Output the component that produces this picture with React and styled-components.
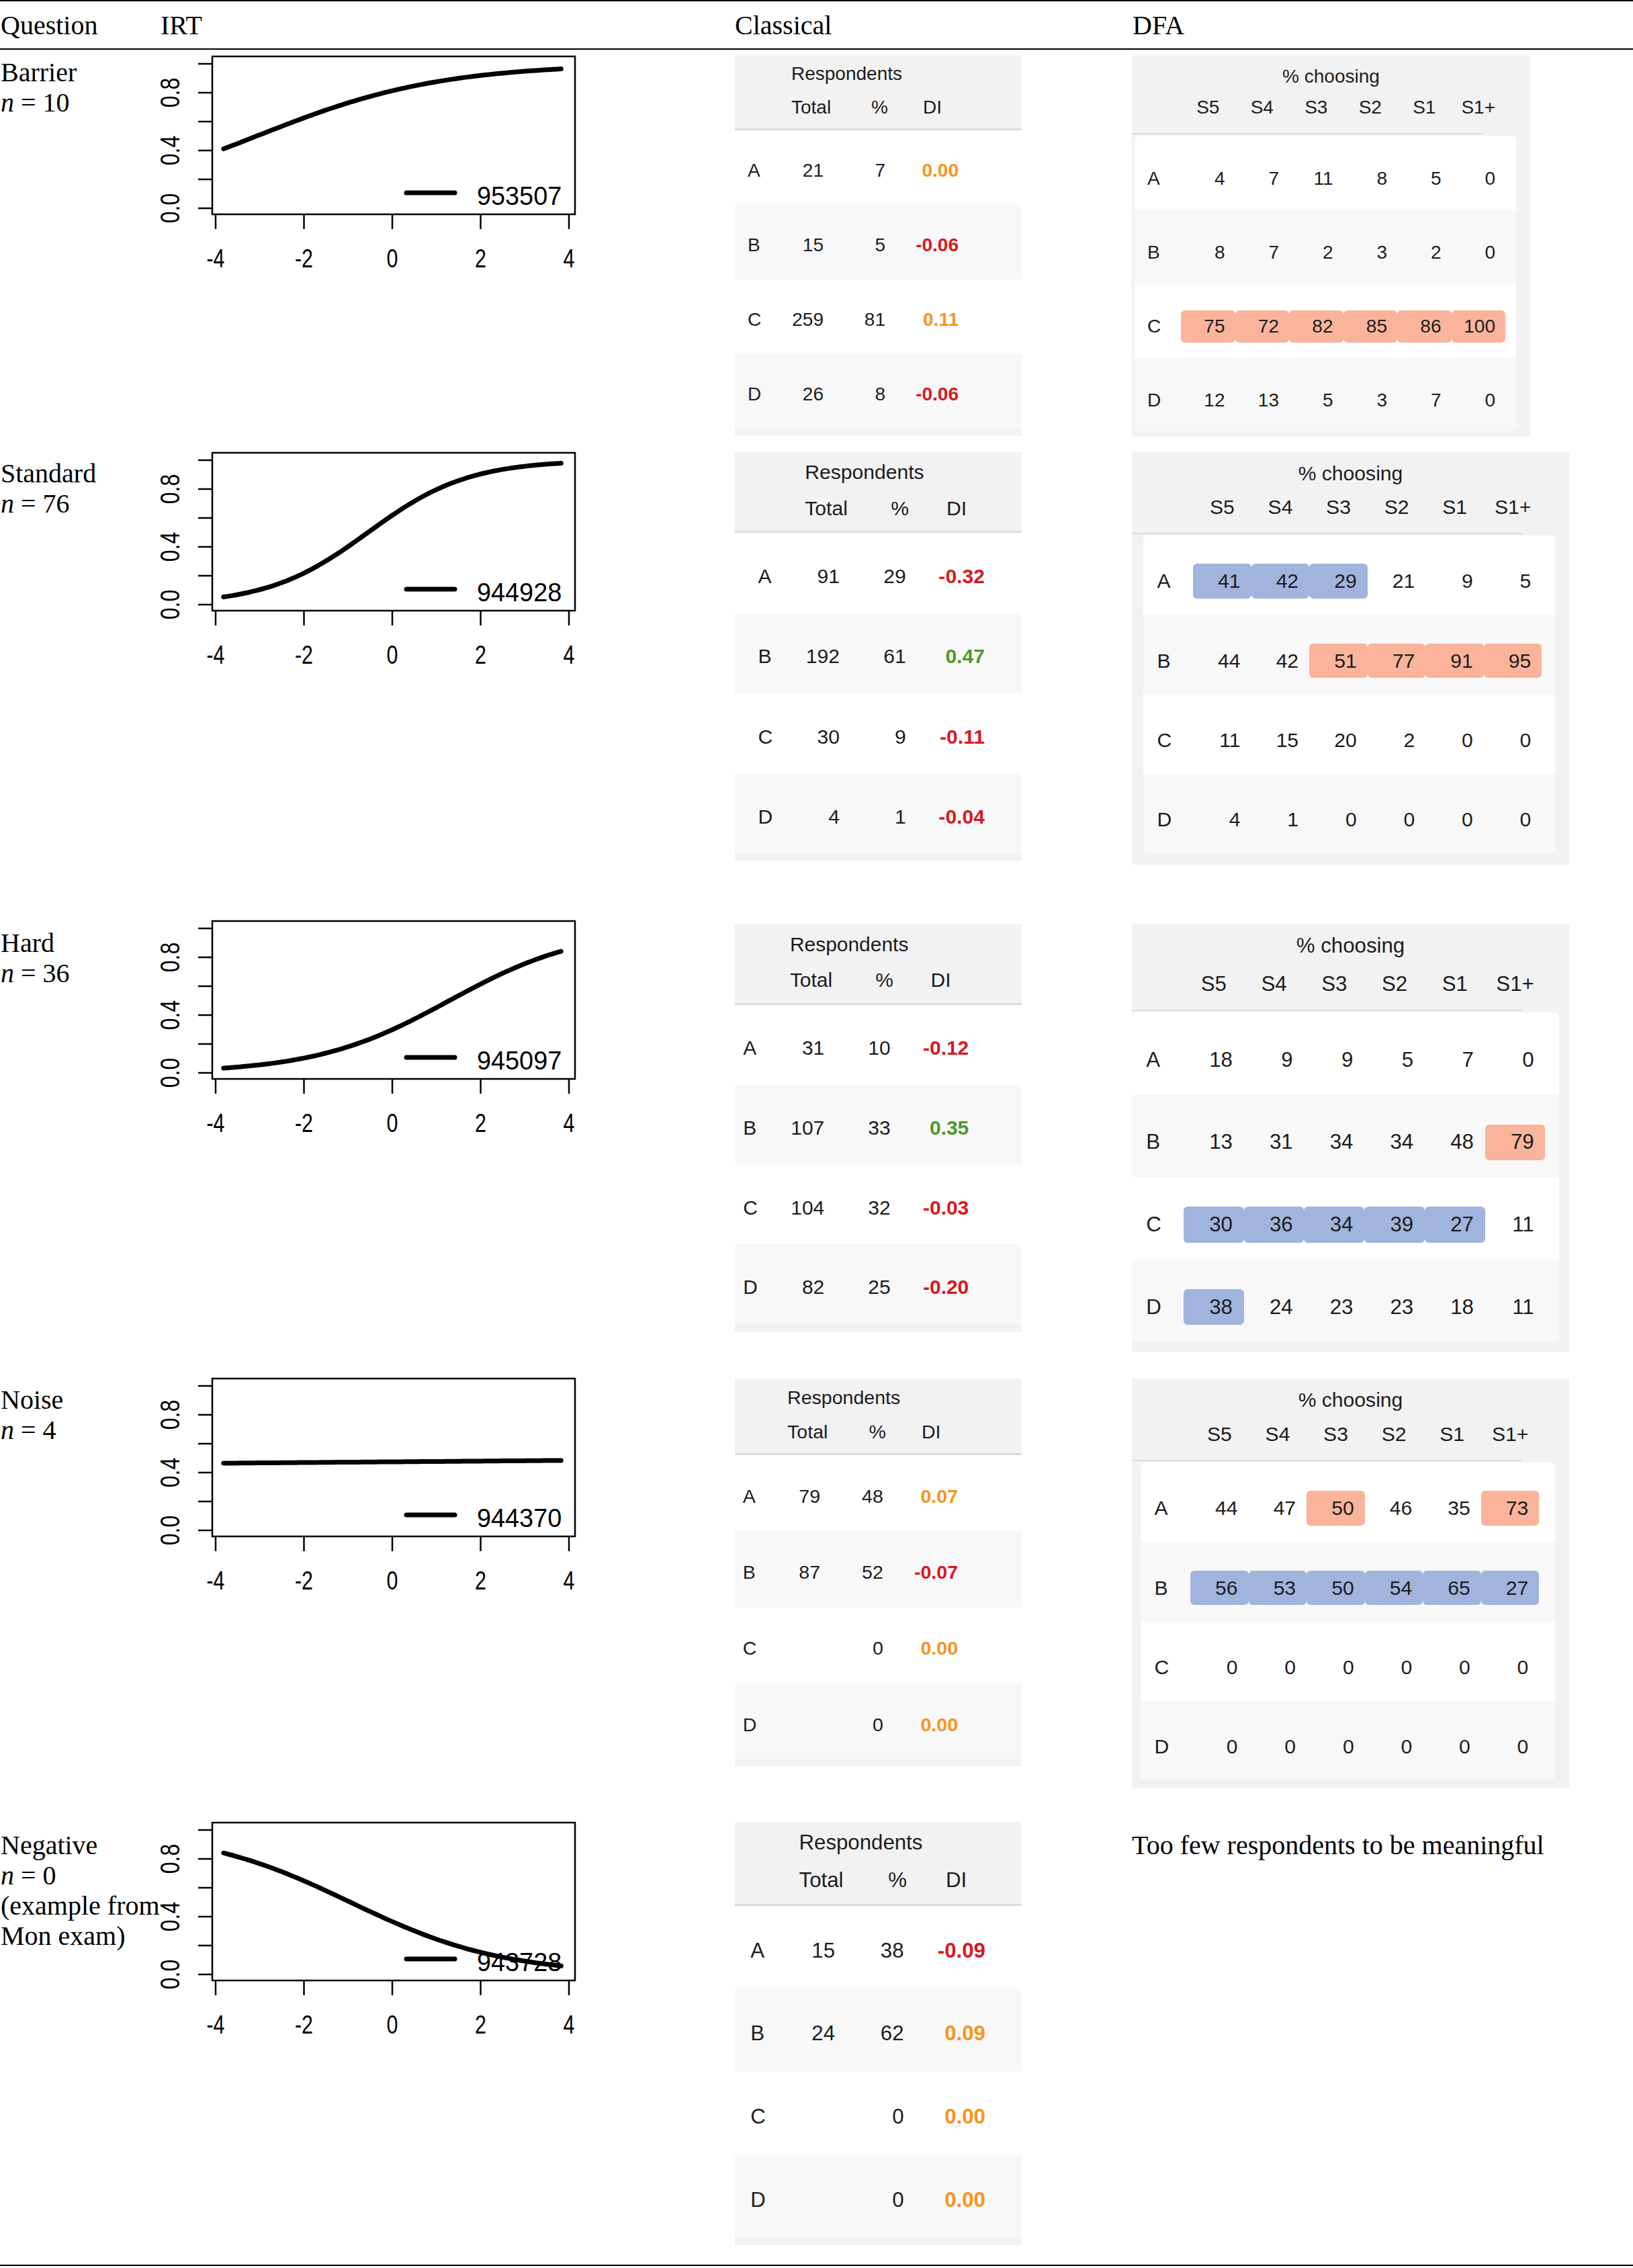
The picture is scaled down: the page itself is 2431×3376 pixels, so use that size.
import React from "react";
import styled, { createGlobalStyle } from "styled-components";

const GlobalStyle = createGlobalStyle`
  html, body {
    margin: 0;
    padding: 0;
    background: #fff;
  }
  body {
    font-family: "Liberation Serif", "Times New Roman", serif;
    color: #000;
  }
`;

const COLS = "239px 855px 591px 1fr";

const DI_COLORS = { o: "#f7941d", r: "#d7191f", g: "#4c9a2a" };
const HL_COLORS = { s: "#f9b49b", b: "#a1b4de" };

const Sheet = styled.div`
  width: 2431px;
  border-top: 2px solid #000;
  border-bottom: 2px solid #000;
`;

const HeadRow = styled.div`
  display: grid;
  grid-template-columns: ${COLS};
  padding: 13px 0 12px;
  border-bottom: 2px solid #000;
  font-size: 40px;
  line-height: 45px;
`;

const HeadCell = styled.div`
  padding-left: ${(p) => p.$pl || 0}px;
  white-space: nowrap;
`;

const Body = styled.div`
  padding-top: 8px;
`;

const BodyRow = styled.div`
  display: grid;
  grid-template-columns: ${COLS};
  align-items: start;
  height: ${(p) => p.$h}px;
`;

const QLabel = styled.div`
  padding-top: ${(p) => p.$pt}px;
  padding-left: 1px;
  font-size: 40px;
  line-height: 45px;
  white-space: nowrap;
`;

const Note = styled(QLabel)`
  padding-left: 0;
`;

/* ---------- IRT plot ---------- */

const PlotSvg = styled.svg`
  display: block;
  overflow: visible;
`;

const X0 = 82;
const XU = 65.75;
const Y0 = 228;
const YU = 215;
const xs = (t) => X0 + (t + 4) * XU;
const ys = (v) => Y0 - v * YU;

const logistic = (a, b) => (t) => 1 / (1 + Math.exp(-a * (t - b)));

function IrtPlot({ f, legend }) {
  const pts = [];
  for (let i = 0; i <= 80; i++) {
    const t = -3.82 + (7.64 * i) / 80;
    pts.push(`${xs(t).toFixed(1)},${ys(f(t)).toFixed(1)}`);
  }
  return (
    <PlotSvg width="640" height="330" viewBox="0 0 640 330">
      <g fontFamily='"Liberation Sans", Arial, sans-serif' fill="#000">
        <rect x="77" y="2" width="540" height="235" fill="none" stroke="#000" strokeWidth="2.5" />
        {[0, 0.2, 0.4, 0.6, 0.8, 1].map((v) => (
          <line key={v} x1="56" x2="77" y1={ys(v)} y2={ys(v)} stroke="#000" strokeWidth="2.5" />
        ))}
        {[0, 0.4, 0.8].map((v) => (
          <text
            key={v}
            fontSize="40"
            textAnchor="middle"
            transform={`translate(28 ${ys(v)}) rotate(-90) scale(0.8 1)`}
          >
            {v.toFixed(1)}
          </text>
        ))}
        {[-4, -2, 0, 2, 4].map((t) => (
          <g key={t}>
            <line x1={xs(t)} x2={xs(t)} y1="237" y2="259" stroke="#000" strokeWidth="2.5" />
            <text fontSize="38" textAnchor="middle" transform={`translate(${xs(t)} 316) scale(0.8 1)`}>
              {t < 0 ? `-${-t}` : t}
            </text>
          </g>
        ))}
        <polyline
          points={pts.join(" ")}
          fill="none"
          stroke="#000"
          strokeWidth="7"
          strokeLinejoin="round"
          strokeLinecap="round"
        />
        <line x1="366" x2="438" y1="205" y2="205" stroke="#000" strokeWidth="7" strokeLinecap="round" />
        <text fontSize="39" transform="translate(471 223) scale(0.97 1)">
          {legend}
        </text>
      </g>
    </PlotSvg>
  );
}

/* ---------- Classical table ---------- */

const CBox = styled.div`
  width: 427px;
  margin-top: ${(p) => p.$mt}px;
  overflow: hidden;
  background: #f2f2f3;
  padding-bottom: ${(p) => 10 * p.$s}px;
  font-family: "Liberation Sans", Arial, sans-serif;
  font-size: ${(p) => 28 * p.$s}px;
  color: #1c1c1c;
`;

const CHead = styled.div`
  box-sizing: border-box;
  height: ${(p) => 112 * p.$s}px;
  padding-top: ${(p) => 11 * p.$s}px;
  border-bottom: 3px solid #dcdcdf;
`;

const CTitle = styled.div`
  padding-left: ${(p) => 84 * p.$s + p.$a}px;
  line-height: ${(p) => 34 * p.$s}px;
  white-space: nowrap;
`;

const CGrid = styled.div`
  display: grid;
  grid-template-columns: ${(p) =>
    `${19 * p.$s + p.$a}px ${65 * p.$s}px ${62 * p.$s}px ${82 * p.$s}px ${105 * p.$s}px`};
  align-items: center;
  white-space: nowrap;
`;

const CHeadCells = styled(CGrid)`
  margin-top: ${(p) => 16 * p.$s}px;
  line-height: ${(p) => 34 * p.$s}px;
`;

const CRow = styled(CGrid)`
  box-sizing: border-box;
  height: ${(p) => 111 * p.$s}px;
  padding-top: ${(p) => 9 * p.$s}px;
  background: ${(p) => (p.$alt ? "#f8f8f9" : "#fff")};
`;

const TextCell = styled.span`
  text-align: ${(p) => p.$align || "left"};
  padding-left: ${(p) => p.$pl || 0}px;
  padding-right: ${(p) => p.$pr || 0}px;
`;

const DiCell = styled.span`
  text-align: right;
  font-weight: 700;
  color: ${(p) => DI_COLORS[p.$c]};
`;

function Classical({ s, a, mt, rows }) {
  return (
    <CBox $s={s} $mt={mt}>
      <CHead $s={s}>
        <CTitle $s={s} $a={a}>Respondents</CTitle>
        <CHeadCells $s={s} $a={a}>
          <span />
          <span />
          <TextCell>Total</TextCell>
          <TextCell $align="right">%</TextCell>
          <TextCell $pl={52 * s}>DI</TextCell>
        </CHeadCells>
      </CHead>
      {rows.map(([opt, total, pct, di, c], i) => (
        <CRow key={opt} $s={s} $a={a} $alt={i % 2 === 1}>
          <span />
          <TextCell>{opt}</TextCell>
          <TextCell $align="right" $pr={14 * s}>{total}</TextCell>
          <TextCell $align="right" $pr={4 * s}>{pct}</TextCell>
          <DiCell $c={c}>{di}</DiCell>
        </CRow>
      ))}
    </CBox>
  );
}

/* ---------- DFA table ---------- */

const DBox = styled.div`
  width: ${(p) => p.$w}px;
  margin-top: ${(p) => p.$mt}px;
  padding-bottom: ${(p) => p.$pb}px;
  background: #f2f2f3;
  font-family: "Liberation Sans", Arial, sans-serif;
  font-size: ${(p) => 28 * p.$s}px;
  color: #1c1c1c;
`;

const DHead = styled.div`
  height: ${(p) => p.$h}px;
  overflow: hidden;
`;

const DTitle = styled.div`
  text-align: center;
  padding-top: ${(p) => 32 - 17 * p.$s}px;
  line-height: ${(p) => 34 * p.$s}px;
`;

const DGrid = styled.div`
  display: grid;
  grid-template-columns: ${(p) => `${69 * p.$s}px repeat(6, ${80.5 * p.$s}px)`};
  align-items: center;
  white-space: nowrap;
`;

const DHeadCells = styled(DGrid)`
  margin-left: ${(p) => p.$inset}px;
  margin-top: ${(p) => p.$h - 70 - 34 * p.$s}px;
  line-height: ${(p) => 34 * p.$s}px;
`;

const SLabel = styled.span`
  text-align: center;
`;

const DRule = styled.div`
  width: ${(p) => p.$w}px;
  height: 2px;
  background: #dcdcdf;
`;

const DCard = styled.div`
  margin: 2px 0 0 ${(p) => p.$inset}px;
  width: ${(p) => p.$w}px;
  background: #fff;
  border-radius: 8px;
  overflow: hidden;
`;

const DRow = styled(DGrid)`
  box-sizing: border-box;
  height: ${(p) => 110 * p.$s}px;
  padding-top: ${(p) => 17 * p.$s}px;
  background: ${(p) => (p.$alt ? "#f8f8f9" : "#fff")};
`;

const OptCell = styled.span`
  padding-left: ${(p) => 19 * p.$s}px;
`;

const PctCell = styled.span`
  height: ${(p) => 48 * p.$s}px;
  display: flex;
  align-items: center;
  justify-content: flex-end;
  padding-right: ${(p) => 15 * p.$s}px;
  border-radius: 6px;
  background: ${(p) => HL_COLORS[p.$hl] || "transparent"};
`;

const STAGES = ["S5", "S4", "S3", "S2", "S1", "S1+"];

function Dfa({ s, w, inset, cardW, headH, mt, pb, rows }) {
  return (
    <DBox $s={s} $w={w} $mt={mt} $pb={pb}>
      <DHead $h={headH}>
        <DTitle $s={s}>% choosing</DTitle>
        <DHeadCells $s={s} $inset={inset} $h={headH}>
          <span />
          {STAGES.map((st) => (
            <SLabel key={st}>{st}</SLabel>
          ))}
        </DHeadCells>
      </DHead>
      <DRule $w={w - 70} />
      <DCard $inset={inset} $w={cardW}>
        {rows.map(([opt, vals, hl], i) => (
          <DRow key={opt} $s={s} $alt={i % 2 === 1}>
            <OptCell $s={s}>{opt}</OptCell>
            {vals.map((v, j) => (
              <PctCell key={j} $s={s} $hl={hl[j]}>
                {v}
              </PctCell>
            ))}
          </DRow>
        ))}
      </DCard>
    </DBox>
  );
}

/* ---------- data ---------- */

const QUESTIONS = [
  {
    name: "Barrier",
    n: "10",
    extra: [],
    h: 590,
    pt: 3,
    f: logistic(0.48, -3.07),
    legend: "953507",
    classical: {
      s: 1,
      a: 0,
      mt: 0,
      rows: [
        ["A", "21", "7", "0.00", "o"],
        ["B", "15", "5", "-0.06", "r"],
        ["C", "259", "81", "0.11", "o"],
        ["D", "26", "8", "-0.06", "r"],
      ],
    },
    dfa: {
      s: 1,
      w: 593,
      inset: 4,
      cardW: 568,
      headH: 116,
      mt: 0,
      pb: 8,
      rows: [
        ["A", [4, 7, 11, 8, 5, 0], "......"],
        ["B", [8, 7, 2, 3, 2, 0], "......"],
        ["C", [75, 72, 82, 85, 86, 100], "ssssss"],
        ["D", [12, 13, 5, 3, 7, 0], "......"],
      ],
    },
  },
  {
    name: "Standard",
    n: "76",
    extra: [],
    h: 697,
    pt: 10,
    f: logistic(0.88, -0.55),
    legend: "944928",
    classical: {
      s: 1.075,
      a: 14,
      mt: 1,
      rows: [
        ["A", "91", "29", "-0.32", "r"],
        ["B", "192", "61", "0.47", "g"],
        ["C", "30", "9", "-0.11", "r"],
        ["D", "4", "1", "-0.04", "r"],
      ],
    },
    dfa: {
      s: 1.075,
      w: 651,
      inset: 17,
      cardW: 613,
      headH: 120,
      mt: 1,
      pb: 17,
      rows: [
        ["A", [41, 42, 29, 21, 9, 5], "bbb..."],
        ["B", [44, 42, 51, 77, 91, 95], "..ssss"],
        ["C", [11, 15, 20, 2, 0, 0], "......"],
        ["D", [4, 1, 0, 0, 0, 0], "......"],
      ],
    },
  },
  {
    name: "Hard",
    n: "36",
    extra: [],
    h: 681,
    pt: 12,
    f: logistic(0.66, 1.29),
    legend: "945097",
    classical: {
      s: 1.07,
      a: -8,
      mt: 7,
      rows: [
        ["A", "31", "10", "-0.12", "r"],
        ["B", "107", "33", "0.35", "g"],
        ["C", "104", "32", "-0.03", "r"],
        ["D", "82", "25", "-0.20", "r"],
      ],
    },
    dfa: {
      s: 1.115,
      w: 651,
      inset: 0,
      cardW: 636,
      headH: 127,
      mt: 7,
      pb: 14,
      rows: [
        ["A", [18, 9, 9, 5, 7, 0], "......"],
        ["B", [13, 31, 34, 34, 48, 79], ".....s"],
        ["C", [30, 36, 34, 39, 27, 11], "bbbbb."],
        ["D", [38, 24, 23, 23, 18, 11], "b....."],
      ],
    },
  },
  {
    name: "Noise",
    n: "4",
    extra: [],
    h: 661,
    pt: 11,
    f: (t) => 0.465 + 0.0025 * (t + 3.82),
    legend: "944370",
    classical: {
      s: 1.02,
      a: -7.6,
      mt: 2,
      rows: [
        ["A", "79", "48", "0.07", "o"],
        ["B", "87", "52", "-0.07", "r"],
        ["C", "", "0", "0.00", "o"],
        ["D", "", "0", "0.00", "o"],
      ],
    },
    dfa: {
      s: 1.075,
      w: 651,
      inset: 13,
      cardW: 617,
      headH: 121,
      mt: 2,
      pb: 12,
      rows: [
        ["A", [44, 47, 50, 46, 35, 73], "..s..s"],
        ["B", [56, 53, 50, 54, 65, 27], "bbbbbb"],
        ["C", [0, 0, 0, 0, 0, 0], "......"],
        ["D", [0, 0, 0, 0, 0, 0], "......"],
      ],
    },
  },
  {
    name: "Negative",
    n: "0",
    extra: ["(example from", "Mon exam)"],
    h: 660,
    pt: 13,
    f: logistic(-0.58, -0.95),
    legend: "943728",
    classical: {
      s: 1.114,
      a: 2,
      mt: 1,
      rows: [
        ["A", "15", "38", "-0.09", "r"],
        ["B", "24", "62", "0.09", "o"],
        ["C", "", "0", "0.00", "o"],
        ["D", "", "0", "0.00", "o"],
      ],
    },
    dfa: null,
  },
];

export default function App() {
  return (
    <>
      <GlobalStyle />
      <Sheet>
        <HeadRow>
          <HeadCell $pl={1}>Question</HeadCell>
          <HeadCell>IRT</HeadCell>
          <HeadCell>Classical</HeadCell>
          <HeadCell $pl={1}>DFA</HeadCell>
        </HeadRow>
        <Body>
          {QUESTIONS.map((q) => (
            <BodyRow key={q.name} $h={q.h}>
              <QLabel $pt={q.pt}>
                <div>{q.name}</div>
                <div>
                  <i>n</i> = {q.n}
                </div>
                {q.extra.map((line) => (
                  <div key={line}>{line}</div>
                ))}
              </QLabel>
              <IrtPlot f={q.f} legend={q.legend} />
              <Classical {...q.classical} />
              {q.dfa ? (
                <Dfa {...q.dfa} />
              ) : (
                <Note $pt={q.pt}>Too few respondents to be meaningful</Note>
              )}
            </BodyRow>
          ))}
        </Body>
      </Sheet>
    </>
  );
}
